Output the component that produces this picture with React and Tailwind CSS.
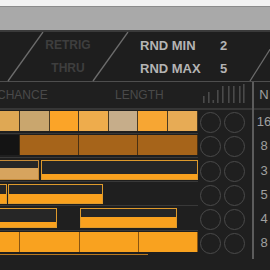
import React from 'react';

const rows = [
  {
    num: '16',
    segs: [
      { w: 30, kind: 'cell', cls: 'bg-[#dfa854] border-[#4a3a22]' },
      { w: 29.5, kind: 'cell', cls: 'bg-[#c9a66e] border-[#4a3a22]' },
      { w: 29.5, kind: 'cell', cls: 'bg-[#fba428] border-[#4a3a22]' },
      { w: 29.5, kind: 'cell', cls: 'bg-[#eeac4c] border-[#4a3a22]' },
      { w: 29.5, kind: 'cell', cls: 'bg-[#c6ad8a] border-[#4a3a22]' },
      { w: 30, kind: 'cell', cls: 'bg-[#f7a633] border-[#4a3a22]' },
      { w: 29.5, kind: 'cell', cls: 'bg-[#e7ab55] border-[#4a3a22]' },
    ],
  },
  {
    num: '8',
    segs: [
      { w: 30, kind: 'cell', cls: 'bg-[#141414] border-[#3a2a14]' },
      { w: 59, kind: 'cell', cls: 'bg-[#a6641a] border-[#4a3012]' },
      { w: 59, kind: 'cell', cls: 'bg-[#a6641a] border-[#4a3012]' },
      { w: 59.5, kind: 'cell', cls: 'bg-[#a6641a] border-[#4a3012]' },
    ],
  },
  {
    num: '3',
    segs: [
      { w: 49, kind: 'note', fill: 58, tan: true },
      { w: 157, ml: 2, kind: 'note', fill: 28 },
    ],
  },
  {
    num: '5',
    segs: [
      { w: 17, kind: 'note', fill: 50 },
      { w: 95, ml: 1, kind: 'note', fill: 50 },
    ],
  },
  {
    num: '4',
    segs: [
      { w: 67, kind: 'note', fill: 30 },
      { w: 97, ml: 23, kind: 'note', fill: 55 },
    ],
  },
  {
    num: '8',
    segs: [
      { w: 30, kind: 'cell', cls: 'bg-[#f9a21f] border-[#8a5510]' },
      { w: 60, kind: 'cell', cls: 'bg-[#f9a21f] border-[#8a5510]' },
      { w: 59, kind: 'cell', cls: 'bg-[#f9a21f] border-[#8a5510]' },
      { w: 59, kind: 'cell', cls: 'bg-[#f9a21f] border-[#8a5510]' },
    ],
  },
];

const bars = [
  [2, 14], [7, 10], [11.5, 18], [16, 8], [21, 4], [27, 4], [32, 4], [38, 4], [42, 2],
];

function Segment({ seg }) {
  if (seg.kind === 'cell') {
    return (
      <div
        className={`h-full shrink-0 border-r ${seg.cls}`}
        style={{ width: seg.w, marginLeft: seg.ml || 0 }}
      />
    );
  }
  return (
    <div
      className={`h-full shrink-0 flex flex-col justify-end border-[1.5px] bg-[#262626] ${
        seg.tan ? 'border-[#c58a38]' : 'border-[#de9a2c]'
      }`}
      style={{ width: seg.w, marginLeft: seg.ml || 0 }}
    >
      <div
        className={seg.tan ? 'bg-[#d7a45e]' : 'bg-[#f9a11e]'}
        style={{ height: `${seg.fill}%` }}
      />
    </div>
  );
}

export default function App() {
  return (
    <div className="w-[270px] h-[270px] overflow-hidden bg-[#1f1f1f] flex flex-col font-['Liberation_Sans',Arial,sans-serif]">
      <div className="h-[6px] shrink-0 bg-[#f3f3f3]" />
      <div className="h-px shrink-0 bg-[#8c8c8c]" />
      <div className="h-[23px] shrink-0 bg-[#a9a9a9]" />
      <div className="h-[2px] shrink-0 bg-[#3a3a3a]" />

      {/* top panel */}
      <div className="relative h-[50px] shrink-0 bg-[#1e1e1e] border-b border-[#4e4e4e] flex">
        <svg className="absolute inset-0" width="270" height="50">
          <line x1="43" y1="0" x2="8" y2="49" stroke="#6c6c6c" strokeWidth="1.3" />
          <line x1="128" y1="0" x2="93" y2="49" stroke="#6c6c6c" strokeWidth="1.3" />
          <line x1="281" y1="0" x2="250" y2="49" stroke="#6c6c6c" strokeWidth="1.3" />
        </svg>
        <div className="w-[23px] shrink-0" />
        <div className="relative w-[90px] shrink-0 pt-[2px] flex flex-col items-center text-[12px] font-bold text-[#3e3e3e]">
          <div className="h-[23px] leading-[23px]">RETRIG</div>
          <div className="h-[23px] leading-[23px]">THRU</div>
        </div>
        <div className="relative ml-[27px] pt-[2px] flex flex-col text-[13px] font-bold text-[#b4b4b4]">
          <div className="h-[23px] leading-[23px] flex">
            <span className="w-[80px]">RND MIN</span>
            <span>2</span>
          </div>
          <div className="h-[23px] leading-[23px] flex">
            <span className="w-[80px]">RND MAX</span>
            <span>5</span>
          </div>
        </div>
      </div>

      {/* sequencer */}
      <div className="flex shrink-0">
        <div className="w-[252px] shrink-0 flex flex-col">
          <div className="h-[28px] border-b-2 border-[#363636] flex items-center text-[12px] text-[#4a4a4a]">
            <div className="w-[118px] shrink-0 -ml-[3px]">CHANCE</div>
            <div className="w-[86px] shrink-0">LENGTH</div>
            <svg width="46" height="26" className="shrink-0 self-start">
              {bars.map(([x, top], i) => (
                <rect key={i} x={x} y={top} width="1.6" height={21 - top} fill="#4a4a4a" />
              ))}
            </svg>
          </div>
          <div className="pt-[1px] flex flex-col">
            {rows.map((row, i) => (
              <div key={i} className="h-[24.3px] flex flex-col">
                <div className="h-[20px] flex">
                  <div className="w-[198px] shrink-0 overflow-hidden">
                    <div className="h-full flex -ml-[10px]">
                      {row.segs.map((seg, j) => (
                        <Segment key={j} seg={seg} />
                      ))}
                    </div>
                  </div>
                  <div className="ml-[2px] mt-[1px] w-[21px] h-[21px] shrink-0 rounded-full border-[1.5px] border-[#4a4a4a]" />
                  <div className="ml-[3px] mt-[1px] w-[21px] h-[21px] shrink-0 rounded-full border-[1.5px] border-[#4a4a4a]" />
                </div>
                <div
                  className={
                    i === rows.length - 1
                      ? 'mt-[1.5px] h-px w-[148px] bg-[#b87820]'
                      : 'mt-[1.5px] h-px w-[198px] bg-[#383838]'
                  }
                />
              </div>
            ))}
          </div>
        </div>
        <div className="w-[1.5px] h-[177px] shrink-0 bg-[#5c5c5c]" />
        <div className="w-[21px] shrink-0 flex flex-col items-center text-[13px] text-[#a0a0a0]">
          <div className="h-[28px] leading-[26px] border-b-2 border-[#363636] w-full text-center">N</div>
          <div className="pt-[1px] w-full flex flex-col">
            {rows.map((row, i) => (
              <div key={i} className="h-[24.3px] leading-[22px] text-center">
                {row.num}
              </div>
            ))}
          </div>
        </div>
      </div>
    </div>
  );
}
